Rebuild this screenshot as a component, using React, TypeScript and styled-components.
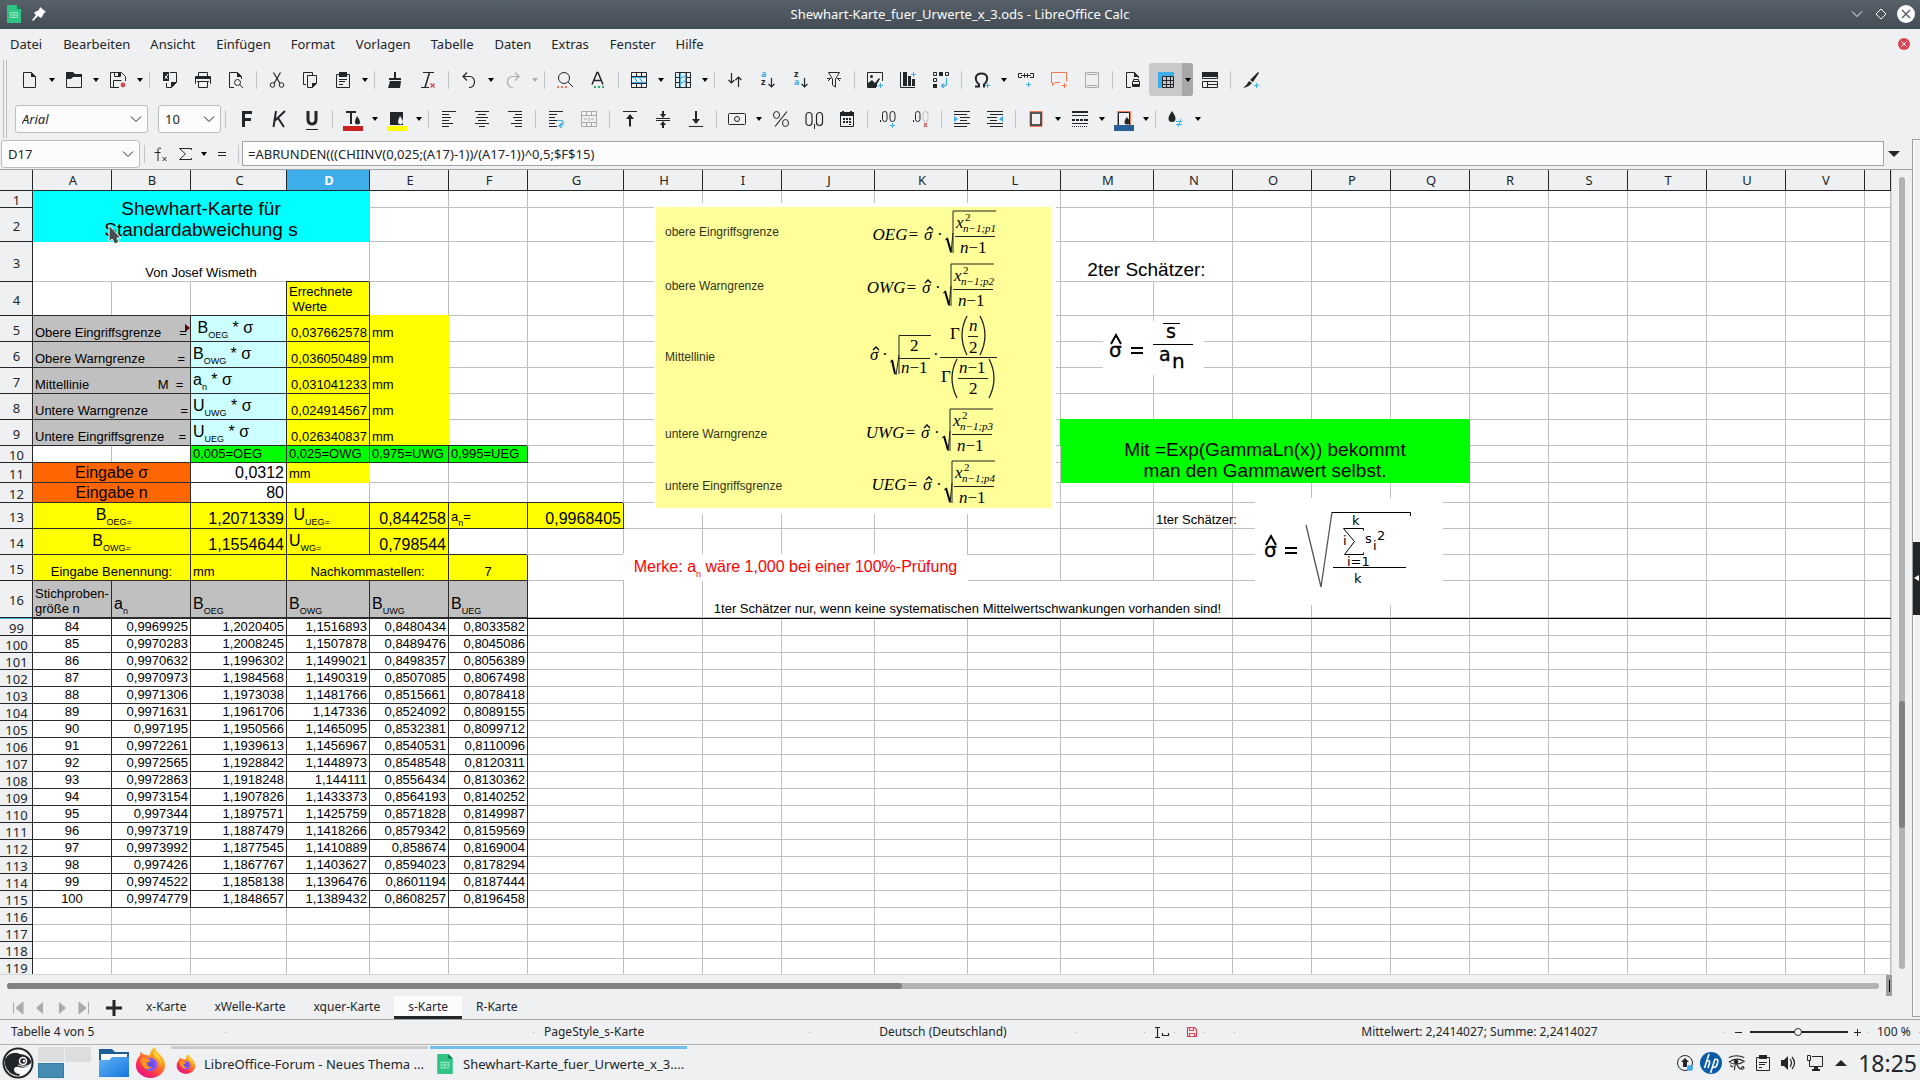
import React from "react";
import styled, { createGlobalStyle, css } from "styled-components";

const INK = "#232629";
const BLUE = "#3daee9";
const RED = "#da4453";
const ORANGE = "#f67450";
const GREEN = "#27ae60";
const MUTED = "#a8aaac";
const PANEL = "#eff0f1";
const LINE = "#a0a2a3";
const GRID = "#c0c0c0";
const UI_FONT = `"Noto Sans", sans-serif`;
const CELL_FONT = `"Liberation Sans", Arial, sans-serif`;

const GlobalStyle = createGlobalStyle`
  *, *::before, *::after { box-sizing: border-box; }
  html, body { margin: 0; padding: 0; }
  body { background: ${PANEL}; color: ${INK}; font-family: ${UI_FONT}; font-size: 13px; overflow: hidden; }
  button, input, select { font: inherit; color: inherit; margin: 0; }
`;

/* ---------- icons ---------- */

type Glyph = React.ReactNode;
const ln = (d: string, stroke = INK, width = 1) => (
  <path d={d} fill="none" stroke={stroke} strokeWidth={width} />
);
const fl = (d: string, fill = INK) => <path d={d} fill={fill} />;
const plus = (x: number, y: number, c = BLUE) => ln(`M${x - 2} ${y + 0.5}h5M${x + 0.5} ${y - 2}v5`, c);
const cross = (x: number, y: number) => ln(`M${x} ${y}l4 4m0 -4l-4 4`, RED, 1.3);
const lines = (rows: [number, number][], c = INK) =>
  ln(rows.map(([x, w], i) => `M${x} ${i * 3 + 0.5}h${w}`).join(""), c);

const glyphs: Record<string, Glyph> = {
  new: <>{ln("M1.5 .5h8l4 4v11h-12z")}{fl("M9 0l5 5h-5z")}</>,
  open: <>{ln("M.5 .5v15h15v-12")}{fl("M0 0h7l2 2h7v3H7L5 7H0z")}</>,
  save: <>{ln("M9 15.5H.5V.5h11l4 4V9")}{ln("M4.5 .5v4h6v-4M3.5 15V8.5h8")}{fl("M8 1h2v3H8z")}<circle cx="13" cy="13" r="2.4" fill={RED} /></>,
  exportPdf: <>{fl("M1 0h6v9H1z")}{ln("M3 7l3-5M3 4l3 3", PANEL)}{ln("M8 .5h6.5v10l-5 5h-5V11")}{fl("M9 10h6l-6 6z")}</>,
  print: <>{ln("M3.5 4V.5h9V4M1 11.5h-.5v-7h15v7H15")}{fl("M1 5h14v2H1z")}{ln("M3.5 9.5h9v6h-9z")}{ln("M2 9.5h12")}</>,
  preview: <>{ln("M6 15.5H1.5V.5h8l4 4V7")}{fl("M9 0l5 5h-5z")}<circle cx="9.5" cy="10.5" r="3" fill="none" stroke={INK} />{ln("M11.5 12.5l3.5 3.5")}</>,
  cut: <>{ln("M4.500 .5l6.500 11M11.500 .5L5 11.500", INK, 1.2)}<circle cx="3.500" cy="13" r="2.300" fill="none" stroke={INK} /><circle cx="12.500" cy="13" r="2.300" fill="none" stroke={INK} /></>,
  copy: <>{ln("M4 12.500H1.500V.5h9V3")}{ln("M5.500 3.500h9v8l-4 4h-5z")}{fl("M10 11h5l-5 5z")}</>,
  paste: <>{ln("M1.500 2.500h13v13h-13z")}{fl("M4 0h8v5H4z")}{ln("M4 7.500h8M4 9.500h6M4 12.500h4")}</>,
  brush: <>{fl("M7 0h2v6h5v2H2V6h5z")}{fl("M3 9h11l-1 7H1z")}</>,
  clear: <>{ln("M3 .5h11M1 15.500h8")}{ln("M9.500 .5L5 15.500", INK, 1.500)}{cross(10.5, 11.5)}</>,
  undo: <>{ln("M2 4.500h7a4.500 5.500 0 0 1 0 11H8", INK, 1.200)}{ln("M6 .5L2 4.500l4 4", INK, 1.200)}</>,
  redo: <>{ln("M14 4.500H7a4.500 5.500 0 0 0 0 11h1", MUTED, 1.200)}{ln("M10 .5l4 4-4 4", MUTED, 1.200)}</>,
  find: <><circle cx="7" cy="6" r="5.500" fill="none" stroke={INK} />{ln("M11 10l5 5")}{fl("M0 14h2v2H0zM4 14h2v2H4zM8 14h2v2H8z", ORANGE)}</>,
  spell: <>{ln("M2 12.500L7 .5h1l5 12M4 8.500h7", INK, 1.500)}{fl("M4 14h2v2H4zM8 14h2v2H8zM12 14h2v2h-2z", GREEN)}</>,
  row: <>{ln("M.5 .5h15v15H.5zM.5 4.500h15M.5 11.500h15M5.500 .5v4M10.500 .5v4M5.500 11.500v4M10.500 11.500v4")}{ln("M1 5.500h14M1 10.500h14M3 5l4 6M8 5l4 6", BLUE, 1.200)}</>,
  col: <>{ln("M.5 .5h15v15H.5zM4.500 .5v15M11.500 .5v15M.5 5.500h4M.5 10.500h4M11.500 5.500h4M11.500 10.500h4")}{ln("M5.500 1v14M10.500 1v14M5 7l6-4M5 12l6-4", BLUE, 1.200)}</>,
  sort: <>{ln("M4.500 1v10M1.500 8l3 3 3-3M11.500 15V5M8.500 8l3-3 3 3", INK, 1.200)}</>,
  filter: <>{ln("M2.500 .5h11L9.500 7v8L6.500 13V7z")}{ln("M1 6.500h4M11 6.500h4M2 9l3-3M14 9l-3-3")}</>,
  image: <>{ln("M9 15.500H.5V.5h15V9")}<circle cx="4.500" cy="4.500" r="1.500" fill={INK} />{fl("M1 15v-4l4-3 3 3 4-5 1 1-3 5v3z")}{plus(13, 13)}</>,
  chart: <>{ln("M.5 0v15.500H15")}{fl("M3 0h4v14H3zM8 4h3v10H8zM12 7h3v7h-3z")}{plus(13, 2)}</>,
  pivot: <>{ln("M.5 .5h3v3h-3zM.5 6.500h3v3h-3zM12.500 .5h3v3h-3z")}{fl("M6 0h4v4H6zM0 12h4v4H0z")}{ln("M13.500 6v6q0 2-4 2M11 11.500L8.500 14l2.500 2", BLUE, 1.200)}</>,
  omega: <>{ln("M1 14.500h4v-2C0 8 1 1.500 7.500 1.500S15 8 10 12.500v2h1", INK, 2)}{plus(13, 13)}</>,
  link: <>{ln("M4 1.500H.5v4H4M7 1.500h-.5v4H7M9 1.500h.5v4H9M12 1.500h3.500v4H12M3 3.500h10")}{plus(10, 12)}</>,
  comment: <>{ln("M9 10.500H4l-2.500 3v-3h-1V.5h15v9", ORANGE)}{plus(13, 13, ORANGE)}</>,
  header: <>{ln("M1.500 .5h13v15h-13zM3 2.500h10M3 13.500h10", MUTED)}</>,
  printRange: <>{ln("M6 15.500H1.500V.5h8l4 4V6")}{fl("M9 0l5 5h-5z")}{ln("M8.500 9.500V7.500h5v2M7.500 9.500h7v5h-7z")}{fl("M8 12h6v2H8z")}</>,
  freeze: <>{fl("M0 0h16v4H4v12H0z", BLUE)}{ln("M4.500 4.500h11v11h-11zM8.500 4v12M12.500 4v12M4 8.500h12M4 12.500h12")}</>,
  split: <>{fl("M0 0h16v5H0z")}{ln("M.5 5v1.500h15V5M.5 9.500h15v6H.5zM5.500 9.500v6M5 12.500h10")}</>,
  pen: <>{fl("M15 0l1 1-6 9-3-2zM6 9l3 2q-3 4-9 5 4-3 6-7z")}{plus(13, 13)}</>,
  bold: <>{fl("M4 0h10v3H7v4h6v3H7v6H4z")}</>,
  italic: <>{ln("M5 0L2.500 16M14 0L4 9.500M7 7l6 9", INK, 2)}</>,
  underline: <>{ln("M4 0v8q0 5 4 5t4-5V0", INK, 3)}{ln("M2 18.500h12")}</>,
  fontColor: <>{ln("M1 1h10M6 1v12", INK, 2)}{fl("M12 5q3 4 3 6a2.500 2.500 0 0 1-5 0q0-2 2-6z")}{fl("M-2 15h20v5H-2z", "#c9211e")}</>,
  fill: <>{fl("M1 1h13v13H1z")}{fl("M11 5q3 4 3 6a2.500 2.500 0 0 1-5 0q0-2 2-6z", PANEL)}{fl("M-2 15h20v5H-2z", "#ffff00")}</>,
  left: lines([[1, 14], [1, 7], [1, 9], [1, 7], [1, 11], [1, 7]]),
  center: lines([[1, 14], [4, 8], [2, 12], [4, 8], [1, 14], [5, 6]]),
  right: lines([[1, 14], [8, 7], [6, 9], [8, 7], [4, 11], [8, 7]]),
  wrap: <>{lines([[1, 14], [1, 8], [1, 6], [1, 8], [1, 6], [1, 8]])}{ln("M9 9.500h5l1 1v3l-3 2M14 12l-3 3 3 2", BLUE, 1.200)}</>,
  merge: <>{ln("M.5 .5h15v15H.5zM.5 4.500h15M.5 11.500h15M5.500 .5v4M10.500 .5v4M5.500 11.500v4M10.500 11.500v4M3 8h3M10 8h3M8 6v4", MUTED)}</>,
  top: <>{ln("M1 .5h14M8 16V5")}{ln("M8 15V6", INK, 2)}{fl("M4 8l4-5 4 5z")}</>,
  middle: <>{ln("M1 7.500h14M1 9.500h14")}{ln("M8 0v4M8 17v-4", INK, 2)}{fl("M5 3h6L8 7zM5 14h6L8 10z")}</>,
  bottom: <>{ln("M1 15.500h14")}{ln("M8 0v10", INK, 2)}{fl("M4 8h8l-4 5z")}</>,
  money: <>{ln("M-.5 3.500q0-1 1-1h15q1 0 1 1v9q0 1-1 1H.5q-1 0-1-1z")}<circle cx="8" cy="8" r="2.500" fill="none" stroke={INK} /></>,
  percent: <>{ln("M14 .5L2 15.500", INK, 1.200)}<ellipse cx="3.500" cy="4" rx="3" ry="3.500" fill="none" stroke={INK} /><ellipse cx="12.500" cy="12" rx="3" ry="3.500" fill="none" stroke={INK} /></>,
  number: <><rect x="0" y="1.500" width="6" height="13" rx="3" fill="none" stroke={INK} strokeWidth="1.200" /><rect x="10.500" y="1.500" width="6" height="13" rx="3" fill="none" stroke={INK} strokeWidth="1.200" />{ln("M8.500 13v5")}</>,
  date: <>{ln("M1.500 2.500h13v13h-13z")}{fl("M1 1h14v4H1zM3 0h2v2H3zM11 0h2v2h-2z")}{fl("M4 7h2v2H4zM7 7h2v2H7zM10 7h2v2h-2zM4 10h2v2H4zM7 10h2v2H7zM10 10h2v2h-2zM10 13h2v1h-2z")}</>,
  addDec: <>{fl("M0 9h1v2H0z")}<rect x="2.500" y=".5" width="4.500" height="10" rx="2.200" fill="none" stroke={INK} /><rect x="10" y=".5" width="5" height="10" rx="2.500" fill="none" stroke={INK} />{plus(12, 14)}</>,
  delDec: <>{fl("M0 9h1v2H0z")}<rect x="2.500" y=".5" width="4.500" height="10" rx="2.200" fill="none" stroke={INK} /><rect x="10" y=".5" width="5" height="10" rx="2.500" fill="none" stroke={GRID} />{ln("M11 12l3 4m0-4l-3 4", RED, 1.200)}</>,
  indent: <>{ln("M0 .5h16M0 3.500h13M6 6.500h10M6 9.500h7M0 12.500h16M0 15.500h13")}{fl("M0 5l4 3-4 3z", BLUE)}</>,
  outdent: <>{ln("M0 .5h16M3 3.500h13M0 6.500h10M3 9.500h7M0 12.500h16M3 15.500h13")}{fl("M16 5l-4 3 4 3z", BLUE)}</>,
  borders: <>{ln("M2 .5h12v15H2z", ORANGE)}{ln("M3 2h10v12H3z", INK, 1.500)}</>,
  lineStyle: <>{fl("M0 0h16v2H0zM0 4h16v1H0z")}{ln("M0 9h16", INK, 2)}{ln("M3.500 8v2M7.500 8v2M11.500 8v2", PANEL)}{ln("M0 12.500h16")}<path d="M0 15.500h16" stroke={INK} strokeDasharray="1 1" /></>,
  borderColor: <>{ln("M1.500 14V.5h13V14", ORANGE)}{ln("M2.500 14V1.500h11V14")}{fl("M11 6q2.500 3 2.500 5a2.500 2.500 0 0 1-5 0q0-2 2.500-5z")}{fl("M-2 14h20v6H-2z", "#2a6099")}</>,
  condition: <>{fl("M4 0q3.500 5 3.500 7.500a3.500 3.500 0 0 1-7 0Q.5 5 4 0z")}{ln("M8 10.500h6M8 13.500h6M13 8l-3 8", BLUE)}</>,
  fx: <>{ln("M8 2.500Q5 1 5 4v11M1.500 6.500h6M9.500 11l4 4m0-4l-4 4")}</>,
  sum: <>{ln("M13.500 4V2.500h-12l6 5.500-6 5.500h12V12")}</>,
  equal: <>{ln("M4 6.500h8M4 9.500h8")}</>,
};

const Svg = styled.svg<{ $s?: number }>`
  display: block;
  flex: none;
  width: ${(p) => p.$s ?? 16}px;
  height: ${(p) => p.$s ?? 16}px;
  overflow: visible;
`;

const SortIcon = ({ desc }: { desc?: boolean }) => (
  <Svg viewBox="0 0 16 16" aria-hidden="true">
    <g fontFamily="Noto Sans, sans-serif" fontSize="9" fontWeight="700">
      <text x="1" y="5" fill={desc ? INK : BLUE}>{desc ? "z" : "a"}</text>
      <text x="1" y="13" fill={desc ? BLUE : INK}>{desc ? "a" : "z"}</text>
    </g>
    {ln("M11.500 6v9M8.500 12l3 3 3-3", INK, 1.2)}
  </Svg>
);

const Icon = ({ name }: { name: string }) => {
  if (name === "asc") return <SortIcon />;
  if (name === "desc") return <SortIcon desc />;
  return <Svg viewBox="0 0 16 16" aria-hidden="true">{glyphs[name]}</Svg>;
};

const CalcLogo = ({ size }: { size: number }) => (
  <Svg $s={size} viewBox="0 0 18 18" aria-hidden="true">
    <path d="M2 0h10l4 4v14H2z" fill="#2fc384" />
    <path d="M12 0l4 4h-4z" fill="#13794a" />
    <path d="M5.500 7.500h7v5h-7zM9 7.500v5M5.500 10h7" fill="none" stroke="#8fe6bd" />
  </Svg>
);

/* ---------- window frame ---------- */

const Desktop = styled.div`
  display: flex;
  flex-direction: column;
  height: 100vh;
  background: ${PANEL};
`;

const TitleBar = styled.header`
  display: grid;
  grid-template-columns: 1fr auto 1fr;
  align-items: center;
  height: 29px;
  flex: none;
  padding: 0 5px 1px;
  background: linear-gradient(#566069, #454d55);
  color: #fcfcfc;
`;

const TitleText = styled.h1`
  margin: 0;
  font-size: 13px;
  line-height: 18px;
  font-weight: 400;
`;

const TitleSide = styled.div<{ $end?: boolean }>`
  display: flex;
  align-items: center;
  gap: 8px;
  justify-content: ${(p) => (p.$end ? "flex-end" : "flex-start")};
`;

const PlainButton = styled.button`
  display: flex;
  align-items: center;
  justify-content: center;
  border: 0;
  padding: 0;
  background: none;
`;

const MenuBar = styled.nav`
  display: flex;
  align-items: center;
  height: 31px;
  flex: none;
  padding: 0 10px 1px 0;
`;

const MenuItem = styled(PlainButton)`
  padding: 0 10px;
  line-height: 20px;

  &:nth-child(even) {
    padding-left: 11px;
  }
`;

const Push = styled.span`
  flex: 1;
`;

const Toolbars = styled.div`
  display: flex;
  flex: none;
  height: 78px;
`;

const Grip = styled.div`
  width: 4px;
  margin: 0 6px 0 3px;
  border: solid #bdbfc1;
  border-width: 0 1px;
`;

const ToolRows = styled.div`
  flex: 1;
  display: flex;
  flex-direction: column;
`;

const ToolRow = styled.div<{ $pad?: number }>`
  display: flex;
  align-items: center;
  height: 39px;
  padding-left: ${(p) => p.$pad ?? 0}px;
`;

const Tool = styled(PlainButton)<{ $on?: boolean }>`
  width: 33px;
  height: 33px;
  ${(p) => p.$on && css`background: #c8c9cb; border-radius: 3px 0 0 3px;`}
`;

const ToolMenu = styled(PlainButton)<{ $on?: boolean; $dim?: boolean }>`
  width: 11px;
  height: 33px;
  color: ${(p) => (p.$dim ? MUTED : "#000")};
  ${(p) => p.$on && css`background: #a5a7a8; border-radius: 0 3px 3px 0;`}
`;

const Caret = styled.span<{ $big?: boolean }>`
  border: solid transparent;
  border-width: ${(p) => (p.$big ? "6px 6px 0" : "4px 3px 0")};
  border-top-color: currentColor;
`;

const Sep = styled.span`
  width: 8px;
  height: 18px;
  flex: none;
  background: linear-gradient(#c4c6c8, #c4c6c8) center / 1px 100% no-repeat;
`;

const ComboBox = styled.label<{ $w: number; $gap?: number; $italic?: boolean }>`
  display: flex;
  align-items: center;
  flex: none;
  width: ${(p) => p.$w}px;
  height: 28px;
  margin-right: ${(p) => p.$gap ?? 0}px;
  padding: 0 5px 0 6px;
  border: 1px solid #bbbdbf;
  border-radius: 3px;
  background: #fcfcfc;
  font-style: ${(p) => (p.$italic ? "italic" : "normal")};
`;

const ComboSelect = styled.select`
  flex: 1;
  min-width: 0;
  border: 0;
  padding: 0;
  background: none;
  appearance: none;
  outline: 0;
`;

const Combo = ({ label, value, ...rest }: { label: string; value: string; $w: number; $gap?: number; $italic?: boolean }) => (
  <ComboBox {...rest}>
    <ComboSelect aria-label={label}>
      <option>{value}</option>
    </ComboSelect>
    <Svg $s={12} viewBox="0 0 12 12">{ln("M1 3.500l5 5 5-5", INK, 1)}</Svg>
  </ComboBox>
);

/* A name per button, "+" after it for an attached drop-down, "|" for a separator. */
const standardTools =
  "new+ open+ save+ | exportPdf print preview | cut copy paste+ | brush clear | undo+ redo+ | find spell | row+ col+ | sort asc desc filter | image chart pivot | omega+ link comment header | printRange freeze+ split | pen";
const formatTools =
  "| bold italic underline | fontColor+ fill+ | left center right | wrap merge | top middle bottom | money+ percent number date | addDec delDec | indent outdent | borders+ lineStyle+ borderColor+ | condition+";

const Tools = ({ spec }: { spec: string }) => (
  <>
    {spec.split(" ").map((token, i) => {
      if (token === "|") return <Sep key={i} />;
      const name = token.replace("+", "");
      const on = name === "freeze";
      return (
        <React.Fragment key={i}>
          <Tool $on={on} aria-label={name}><Icon name={name} /></Tool>
          {token.endsWith("+") && (
            <ToolMenu $on={on} $dim={name === "redo"} aria-label={`${name} menu`}><Caret /></ToolMenu>
          )}
        </React.Fragment>
      );
    })}
  </>
);

/* ---------- document area ---------- */

const Body = styled.main`
  display: flex;
  flex: 1;
  min-height: 0;
  border-bottom: 1px solid ${LINE};
`;

const Document = styled.section`
  display: flex;
  flex-direction: column;
  flex: 1;
  min-width: 0;
`;

const FormulaBar = styled.div`
  display: flex;
  align-items: center;
  height: 32px;
  flex: none;
  padding: 0 12px 0 1px;
  border-bottom: 1px solid ${LINE};
`;

const FormulaTool = styled(PlainButton)`
  width: 25px;
  height: 24px;
`;

const FormulaInput = styled.input`
  flex: 1;
  min-width: 0;
  height: 25px;
  margin: 0 4px 0 0;
  padding: 0 5px;
  border: 1px solid ${LINE};
  background: #fcfcfc;
  outline: 0;
`;

const SheetRow = styled.div`
  display: flex;
  flex: 1;
  min-height: 0;
`;

const SheetView = styled.div`
  position: relative;
  flex: 1;
  min-width: 0;
  overflow: hidden;
  background: #fff;
  border: solid #d5d6d7;
  border-width: 0 1px 1px 0;
`;

const VScroll = styled.div`
  width: 20px;
  flex: none;
  padding: 7px 7px 6px;
`;

const Track = styled.div`
  display: flex;
  width: 100%;
  height: 100%;
  border-radius: 3px;
  background: #b1b3b5;
`;

const VThumb = styled.div`
  width: 6px;
  height: 16%;
  margin-top: 524px;
  border-radius: 3px;
  background: #7f8183;
`;

const HScrollRow = styled.div`
  display: flex;
  height: 21px;
  flex: none;
  padding-right: 20px;
`;

const HScroll = styled.div`
  flex: 1;
  padding: 8px 7px 7px;
`;

const HThumb = styled.div`
  width: 47.8%;
  border-radius: 3px;
  background: #7f8183;
`;

const Splitter = styled.div`
  width: 6px;
  background: linear-gradient(#000, #000) center / 1px 12px no-repeat #9b9d9e;
`;

const Deck = styled.aside`
  display: flex;
  align-items: center;
  width: 8px;
  flex: none;
  margin: 1px 0 2px;
  border: 1px solid #9b9d9e;
  border-right: 0;
  box-shadow: inset 1px 1px #fff;
`;

const DeckHandle = styled(PlainButton)`
  width: 7px;
  height: 73px;
  background: ${INK};
`;

const DeckArrow = styled.span`
  border: solid transparent;
  border-width: 3px 5px 3px 0;
  border-right-color: #fff;
`;

const Tabs = styled.div`
  display: flex;
  height: 23px;
  flex: none;
  padding-left: 7px;
`;

const TabNav = styled(PlainButton)`
  width: 22px;
`;

const AddTab = styled(PlainButton)`
  width: 37px;
`;

const Tab = styled.button<{ $active?: boolean }>`
  border: 0;
  border-bottom: 3px solid ${(p) => (p.$active ? INK : "transparent")};
  padding: 1px 14px 0;
  background: ${(p) => (p.$active ? "#fcfcfc" : "none")};
  line-height: 19px;
  font-size: 12px;
`;

/* ---------- sheet ---------- */

const Table = styled.table`
  width: 100%;
  table-layout: fixed;
  border-collapse: separate;
  border-spacing: 0;
  font-family: ${CELL_FONT};
  font-size: 13px;
  line-height: 15px;
  color: #000;
`;

const ColHead = styled.th<{ $on?: boolean }>`
  height: 21px;
  padding: 0 0 0 2px;
  border: solid ${INK};
  border-width: 0 1px 1px 0;
  background: ${(p) => (p.$on ? BLUE : PANEL)};
  color: ${(p) => (p.$on ? "#fcfcfc" : INK)};
  font-family: ${UI_FONT};
  font-weight: ${(p) => (p.$on ? 700 : 400)};
`;

const RowHead = styled.th<{ $h: number }>`
  height: ${(p) => p.$h}px;
  padding: 2px 0 0 1px;
  border: solid ${INK};
  border-width: 0 1px 1px 0;
  background: ${PANEL};
  color: ${INK};
  font-family: ${UI_FONT};
  font-weight: 400;
  line-height: 14px;
  vertical-align: middle;
`;

const FreezeCell = styled.td<{ $c: string }>`
  height: 1px;
  padding: 0;
  background: ${(p) => p.$c};
`;

type CellStyle = {
  $bg?: string;
  $edge?: string;
  $lead?: string;
  $align?: string;
  $size?: number;
  $sub?: boolean;
  $color?: string;
};

const Cell = styled.td<CellStyle>`
  position: relative;
  padding: 0 2px ${(p) => (p.$sub ? 4 : p.$size === 16 ? 0 : 1)}px 2px;
  border: solid ${(p) => p.$edge ?? GRID};
  border-width: 0 1px 1px 0;
  background: ${(p) => p.$bg ?? "transparent"};
  color: ${(p) => p.$color ?? "#000"};
  ${(p) => p.$lead && css`box-shadow: ${p.$lead};`}
  font-size: ${(p) => p.$size ?? 13}px;
  line-height: ${(p) => (p.$size === 19 ? 21 : p.$size === 16 ? 18 : 15)}px;
  text-align: ${(p) => p.$align ?? "left"};
  vertical-align: bottom;
  white-space: pre;

  sub {
    font-size: 9px;
    line-height: 0;
    vertical-align: -5px;
  }
`;

const OverflowMark = styled.span`
  position: absolute;
  top: 8px;
  right: 0;
  border: solid transparent;
  border-width: 4px 0 4px 5px;
  border-left-color: #500;
`;

type Spec = CellStyle & { text?: React.ReactNode; cols?: number; rows?: number };

const DARK = "#2b2b2b";
const box = (bg?: string): CellStyle => ({ $bg: bg, $edge: DARK, $lead: `-1px -1px 0 ${DARK}` });
const flat = (bg: string): CellStyle => ({ $bg: bg, $edge: bg, $lead: `0 -1px 0 ${bg}` });
const YELLOW = "#ffff00";
const CYAN = "#ccffff";
const GREY = "#c0c0c0";
const LIME = "#00ff00";
const FIRE = "#ff6600";
const sub = (a: string, s: string, b = "") => <>{a}<sub>{s}</sub>{b}</>;

const columns = "ABCDEFGHIJKLMNOPQRSTUV".split("");
const widths = [79, 79, 96, 83, 79, 79, 96, 79, 79, 93, 93, 93, 93, 79, 79, 79, 79, 79, 79, 79, 79, 79];

const limitRow = (label: React.ReactNode, factor: React.ReactNode, value: string): Record<string, Spec> => ({
  A: { ...box(GREY), cols: 2, text: label },
  C: { ...box(CYAN), $size: 16, $sub: true, text: factor },
  D: { ...box(YELLOW), $align: "right", text: value },
  E: { ...flat(YELLOW), text: "mm" },
});

const topRows: { n: number; h: number; cells: Record<string, Spec> }[] = [
  { n: 1, h: 17, cells: { A: { $bg: "#00ffff", $edge: "#00ffff", cols: 4, rows: 2, $size: 19, $align: "center", text: "Shewhart-Karte für\nStandardabweichung s" } } },
  { n: 2, h: 34, cells: {} },
  { n: 3, h: 40, cells: { A: { cols: 4, $align: "center", text: "Von Josef Wismeth" }, M: { cols: 2, $size: 19, $align: "center", text: "2ter Schätzer:" } } },
  { n: 4, h: 34, cells: { D: { ...box(YELLOW), text: "Errechnete\n Werte" } } },
  { n: 5, h: 26, cells: limitRow(<>Obere Eingriffsgrenze     =<OverflowMark /></>, sub(" B", "OEG", " * σ"), "0,037662578") },
  { n: 6, h: 26, cells: limitRow("Obere Warngrenze         =", sub("B", "OWG", " * σ"), "0,036050489") },
  { n: 7, h: 26, cells: limitRow("Mittellinie                   M  =", sub("a", "n", " * σ"), "0,031041233") },
  { n: 8, h: 26, cells: limitRow("Untere Warngrenze         =", sub("U", "UWG", " * σ"), "0,024914567") },
  {
    n: 9, h: 26, cells: {
      ...limitRow("Untere Eingriffsgrenze    =", sub("U", "UEG", " * σ"), "0,026340837"),
      M: { $bg: LIME, $edge: LIME, $lead: `-1px -1px 0 ${LIME}`, cols: 5, rows: 3, $size: 19, $align: "center", text: "Mit =Exp(GammaLn(x)) bekommt\nman den Gammawert selbst." },
    },
  },
  { n: 10, h: 17, cells: { C: { ...box(LIME), text: "0,005=OEG" }, D: { ...box(LIME), text: "0,025=OWG" }, E: { ...box(LIME), text: "0,975=UWG" }, F: { ...box(LIME), text: "0,995=UEG" } } },
  { n: 11, h: 20, cells: { A: { ...box(FIRE), cols: 2, $size: 16, $align: "center", text: "Eingabe σ" }, C: { ...box(), $size: 16, $align: "right", text: "0,0312" }, D: { $bg: YELLOW, $edge: YELLOW, text: "mm" } } },
  { n: 12, h: 20, cells: { A: { ...box(FIRE), cols: 2, $size: 16, $align: "center", text: "Eingabe n" }, C: { ...box(), $size: 16, $align: "right", text: "80" } } },
  {
    n: 13, h: 26, cells: {
      A: { ...box(YELLOW), cols: 2, $size: 16, $sub: true, $align: "center", text: sub(" B", "OEG=") },
      C: { ...box(YELLOW), $size: 16, $align: "right", text: "1,2071339" },
      D: { ...box(YELLOW), $size: 16, $sub: true, text: sub(" U", "UEG=") },
      E: { ...box(YELLOW), $size: 16, $align: "right", text: "0,844258" },
      F: { ...box(YELLOW), $sub: true, text: sub("a", "n", "=") },
      G: { ...box(YELLOW), $size: 16, $align: "right", text: "0,9968405" },
      N: { text: "1ter Schätzer:" },
    },
  },
  {
    n: 14, h: 26, cells: {
      A: { ...box(YELLOW), cols: 2, $size: 16, $sub: true, $align: "center", text: sub("B", "OWG=") },
      C: { ...box(YELLOW), $size: 16, $align: "right", text: "1,1554644" },
      D: { ...box(YELLOW), $size: 16, $sub: true, text: sub("U", "WG=") },
      E: { ...box(YELLOW), $size: 16, $align: "right", text: "0,798544" },
    },
  },
  {
    n: 15, h: 26, cells: {
      A: { ...box(YELLOW), cols: 2, $align: "center", text: "Eingabe Benennung:" },
      C: { ...box(YELLOW), text: "mm" },
      D: { ...box(YELLOW), cols: 2, $align: "center", text: "Nachkommastellen:" },
      F: { ...box(YELLOW), $align: "center", text: "7" },
      H: { $bg: "#fff", $edge: "#fff", $lead: "-1px -1px 0 #fff", cols: 4, $size: 16, $sub: true, $color: "#ff0000", $align: "center", text: sub("Merke: a", "n", " wäre 1,000 bei einer 100%-Prüfung") },
    },
  },
  {
    n: 16, h: 37, cells: {
      A: { ...box(GREY), text: "Stichproben-\ngröße n" },
      B: { ...box(GREY), $size: 16, $sub: true, text: sub("a", "n") },
      C: { ...box(GREY), $size: 16, $sub: true, text: sub("B", "OEG") },
      D: { ...box(GREY), $size: 16, $sub: true, text: sub("B", "OWG") },
      E: { ...box(GREY), $size: 16, $sub: true, text: sub("B", "UWG") },
      F: { ...box(GREY), $size: 16, $sub: true, text: sub("B", "UEG") },
      I: { cols: 6, $align: "center", text: "1ter Schätzer nur, wenn keine systematischen Mittelwertschwankungen vorhanden sind!" },
    },
  },
];

const factors = `84 0,9969925 1,2020405 1,1516893 0,8480434 0,8033582
85 0,9970283 1,2008245 1,1507878 0,8489476 0,8045086
86 0,9970632 1,1996302 1,1499021 0,8498357 0,8056389
87 0,9970973 1,1984568 1,1490319 0,8507085 0,8067498
88 0,9971306 1,1973038 1,1481766 0,8515661 0,8078418
89 0,9971631 1,1961706 1,147336 0,8524092 0,8089155
90 0,997195 1,1950566 1,1465095 0,8532381 0,8099712
91 0,9972261 1,1939613 1,1456967 0,8540531 0,8110096
92 0,9972565 1,1928842 1,1448973 0,8548548 0,8120311
93 0,9972863 1,1918248 1,144111 0,8556434 0,8130362
94 0,9973154 1,1907826 1,1433373 0,8564193 0,8140252
95 0,997344 1,1897571 1,1425759 0,8571828 0,8149987
96 0,9973719 1,1887479 1,1418266 0,8579342 0,8159569
97 0,9973992 1,1877545 1,1410889 0,858674 0,8169004
98 0,997426 1,1867767 1,1403627 0,8594023 0,8178294
99 0,9974522 1,1858138 1,1396476 0,8601194 0,8187444
100 0,9974779 1,1848657 1,1389432 0,8608257 0,8196458`
  .split("\n")
  .map((line) => line.split(" "));

const bottomRows = Array.from({ length: 21 }, (_, i) => ({
  n: 99 + i,
  h: 17,
  cells: Object.fromEntries(
    (factors[i] ?? []).map((text, c) => [columns[c], { ...box(), $align: c ? "right" : "center", text } as Spec])
  ) as Record<string, Spec>,
}));

const renderRows = (rows: { n: number; h: number; cells: Record<string, Spec> }[]) => {
  const covered = new Set<string>();
  return rows.map(({ n, h, cells }, r) => (
    <tr key={n}>
      <RowHead $h={h} scope="row">{n}</RowHead>
      {[...columns, "W"].map((name, c) => {
        if (covered.has(`${r}:${c}`)) return null;
        const { text, cols = 1, rows: down = 1, ...look } = cells[name] ?? {};
        for (let y = 0; y < down; y++) for (let x = 0; x < cols; x++) covered.add(`${r + y}:${c + x}`);
        return <Cell key={name} colSpan={cols} rowSpan={down} {...look}>{text}</Cell>;
      })}
    </tr>
  ));
};

/* ---------- objects floating over the cells ---------- */

const Picture = styled.svg<{ $x: number; $y: number; $w: number; $h: number }>`
  position: absolute;
  left: ${(p) => p.$x}px;
  top: ${(p) => p.$y - 170}px;
  width: ${(p) => p.$w}px;
  height: ${(p) => p.$h}px;
  background: #fff;
`;

const Pointer = styled.svg`
  position: absolute;
  left: 108px;
  top: 54px;
  width: 14px;
  height: 22px;
`;

const Hat = ({ x, y }: { x: number; y: number }) => (
  <path d={`M${x - 3} ${y + 3}l3 -3 3 3`} fill="none" stroke="#000" strokeWidth="1.3" />
);

const LimitFormula = ({ name, p, dy, dx }: { name: string; p: string; dy: number; dx: number }) => (
  <g transform={`translate(${dx} ${dy})`}>
    <text x="919" y="240" textAnchor="end" fontStyle="italic">{name}=</text>
    <text x="924" y="240" fontStyle="italic">σ</text>
    <Hat x={930} y={227} />
    <text x="937" y="240">·</text>
    <path d="M945 240l3 -2 M953 253V211H996M955 236.500H995" fill="none" stroke="#222" />
    <path d="M947 238l4 14" stroke="#000" strokeWidth="2" />
    <path d="M951 253l2 -20" stroke="#222" />
    <text x="956" y="228" fontStyle="italic">x</text>
    <text x="965" y="221" fontSize="11">2</text>
    <text x="963" y="232" fontSize="11" fontStyle="italic">n−1;p{p}</text>
    <text x="960" y="253"><tspan fontStyle="italic">n</tspan>−1</text>
  </g>
);

const FormulaPicture = () => (
  <Picture $x={654} $y={203} $w={402} $h={311} viewBox="654 203 402 311" role="img" aria-label="Formeln der Grenzen">
    <rect x="656" y="207" width="395" height="301" fill="#ffff99" />
    <g fontFamily="Liberation Sans, Arial, sans-serif" fontSize="12" fill="#333320">
      <text x="665" y="236">obere Eingriffsgrenze</text>
      <text x="665" y="290">obere Warngrenze</text>
      <text x="665" y="361">Mittellinie</text>
      <text x="665" y="438">untere Warngrenze</text>
      <text x="665" y="490">untere Eingriffsgrenze</text>
    </g>
    <g fontFamily="Liberation Serif, Times New Roman, serif" fontSize="17" fill="#000">
      <LimitFormula name="OEG" p="1" dx={0} dy={0} />
      <LimitFormula name="OWG" p="2" dx={-2} dy={53} />
      <LimitFormula name="UWG" p="3" dx={-3} dy={198} />
      <LimitFormula name="UEG" p="4" dx={-1} dy={250} />
      <text x="870" y="360" fontStyle="italic">σ</text>
      <Hat x={876} y={347} />
      <text x="882" y="360">·</text>
      <path d="M890 362l3 -2M899 374V335.500H931M899 358.500H930M940 357.500H997" fill="none" stroke="#222" />
      <path d="M892 360l3 14" stroke="#000" strokeWidth="2" />
      <path d="M896 375l3 -20" stroke="#222" />
      <text x="910" y="351">2</text>
      <text x="901" y="373"><tspan fontStyle="italic">n</tspan>−1</text>
      <text x="933" y="360">·</text>
      <text x="950" y="339">Γ</text>
      <path d="M967 316q-10 19 0 39M980 316q10 19 0 39M957 359q-10 19 0 39M989 359q10 19 0 39" fill="none" stroke="#222" strokeWidth="1.300" />
      <text x="969" y="331" fontStyle="italic">n</text>
      <path d="M968 336.500H978M958 378.500H988" stroke="#222" />
      <text x="969" y="353">2</text>
      <text x="941" y="382">Γ</text>
      <text x="959" y="373"><tspan fontStyle="italic">n</tspan>−1</text>
      <text x="969" y="394">2</text>
    </g>
  </Picture>
);

const SecondEstimator = () => (
  <Picture $x={1103} $y={321} $w={101} $h={54} viewBox="1103 321 101 54" role="img" aria-label="2ter Schätzer">
    <g fontFamily="DejaVu Sans, sans-serif" fontSize="20" fill="#000" stroke="#000" strokeWidth=".3">
      <text x="1109" y="357">σ</text>
      <text x="1166" y="338" fontSize="19">s</text>
      <text x="1159" y="361" fontSize="19">a</text>
      <text x="1172" y="368">n</text>
    </g>
    <path d="M1111 344l5 -9 5 9M1131 348H1143M1131 353H1143" fill="none" stroke="#000" strokeWidth="2" />
    <path d="M1163 323.500H1180M1153 344.500H1193" stroke="#000" />
  </Picture>
);

const FirstEstimator = () => (
  <Picture $x={1255} $y={498} $w={188} $h={107} viewBox="1255 498 188 107" role="img" aria-label="1ter Schätzer">
    <g fontFamily="DejaVu Sans, sans-serif" fontSize="13" fill="#000">
      <text x="1264" y="557" fontSize="20" stroke="#000" strokeWidth=".3">σ</text>
      <text x="1352" y="525">k</text>
      <text x="1343" y="545">i</text>
      <text x="1365" y="543">s</text>
      <text x="1373" y="550">i</text>
      <text x="1377" y="540">2</text>
      <text x="1347" y="566">i=1</text>
      <text x="1354" y="583">k</text>
    </g>
    <path d="M1266 545l5 -9 5 9M1285 548H1297M1285 553H1297" fill="none" stroke="#000" strokeWidth="2" />
    <path d="M1306 525L1321 587L1332 512" fill="none" stroke="#555" strokeWidth="1.300" />
    <path d="M1332 512.500H1410.500V516M1363.500 530.500V528.500H1343.500L1354.500 541.500L1344.500 554.500H1363.500V552.500M1333 567.500H1406" fill="none" stroke="#000" />
  </Picture>
);

/* ---------- status bar ---------- */

const StatusBar = styled.footer`
  display: grid;
  grid-template-columns: 226px 308px 276px 266px 69px 30px 30px 30px 1fr 144px 52px;
  align-items: center;
  height: 25px;
  flex: none;
  border-bottom: 1px solid #b0b2b4;
  font-size: 12px;
  line-height: 18px;
`;

const Field = styled.div<{ $pad?: number; $mid?: boolean }>`
  display: flex;
  align-items: center;
  justify-content: ${(p) => (p.$mid ? "center" : "flex-start")};
  padding-left: ${(p) => p.$pad ?? 0}px;
  height: 20px;
  white-space: nowrap;
  background: radial-gradient(#aaa, #aaa) right center / 1px 1px no-repeat;
`;

const ZoomStep = styled(PlainButton)`
  width: 8px;
  height: 16px;
`;

const ZoomRange = styled.input`
  appearance: none;
  width: 98px;
  height: 16px;
  margin: 0 6px 0 7px;
  background: linear-gradient(${INK}, ${INK}) center / 100% 2px no-repeat;
  &::-webkit-slider-thumb {
    appearance: none;
    width: 8px;
    height: 8px;
    border: 1px solid ${INK};
    border-radius: 50%;
    background: #fcfcfc;
  }
`;

/* ---------- task bar ---------- */

const TaskBar = styled.footer`
  display: flex;
  align-items: center;
  height: 35px;
  flex: none;
  padding: 0 3px 0 2px;
`;

const Pager = styled.div`
  display: grid;
  grid-template: 15px 15px / 26px 26px;
  gap: 1px;
  margin: 0 8px 0 4px;
`;

const Desk = styled(PlainButton)<{ $on?: boolean }>`
  background: ${(p) => (p.$on ? "#478cb2" : "#dcddde")};
  ${(p) => p.$on && css`grid-row: 2; border: 1px solid #2e7ba6;`}
`;

const Task = styled.button<{ $active?: boolean }>`
  display: flex;
  align-items: center;
  gap: 8px;
  width: 257px;
  height: 33px;
  margin: 0 2px 0 0;
  padding: 0 0 1px 5px;
  border: 0;
  border-top: 3px solid ${(p) => (p.$active ? "#6fbfec" : "#cbcccd")};
  background: none;
  font-size: 13px;
  white-space: nowrap;
`;

const Launchers = styled.div`
  display: flex;
  gap: 6px;
  margin-right: 5px;
`;

const Tray = styled.div`
  display: flex;
  align-items: center;
  gap: 8px;
`;

const TrayIcon = styled.button`
  display: flex;
  align-items: center;
  justify-content: center;
  width: 18px;
  height: 24px;
  border: 0;
  padding: 0;
  background: none;
`;

const Clock = styled.time`
  font-size: 23px;
  line-height: 32px;
`;

const Firefox = ({ size }: { size: number }) => (
  <Svg $s={size} viewBox="0 0 32 32" aria-hidden="true">
    <defs>
      <linearGradient id="flame" x1="1" y1="0" x2=".3" y2="1">
        <stop offset="0" stopColor="#fff44f" />
        <stop offset=".4" stopColor="#ff9a1f" />
        <stop offset=".75" stopColor="#ff3647" />
        <stop offset="1" stopColor="#e31587" />
      </linearGradient>
      <radialGradient id="globe"><stop offset="0" stopColor="#5b4ad8" /><stop offset="1" stopColor="#9059ff" /></radialGradient>
    </defs>
    <path d="M20 0q2 5 6 8 5 5 5 11a15 13 0 0 1-30 0q0-6 4-10l1-4q2 3 4 3 3 0 5 1 1-6 5-9z" fill="url(#flame)" />
    <circle cx="16" cy="18" r="7" fill="url(#globe)" />
    <path d="M6 12q3-2 6 0 3 0 4 2-1 2-4 2 0 5 6 5-6 4-10-1-3-4-2-8z" fill="#ff9320" />
    <path d="M20 4q8 6 7 15-1-7-6-9-2-3-1-6z" fill="#ffd83a" />
  </Svg>
);

const Chameleon = () => (
  <Svg $s={32} viewBox="0 0 32 32" aria-hidden="true">
    <circle cx="16" cy="16" r="14.500" fill="#fcfcfc" stroke={INK} strokeWidth="2" />
    <path d="M3 12Q9 3 18 7q9 1 11 7 0 4-3 5-5 3-9 1-5-1-5 3 1 4 6 4l-1 2Q6 28 3 18z" fill={INK} />
    <circle cx="21" cy="14" r="3.500" fill="none" stroke="#fcfcfc" strokeWidth="1.500" />
    <circle cx="22" cy="14" r="1.300" fill="#fcfcfc" />
    <path d="M16 18q7 3 13-1" fill="none" stroke="#fcfcfc" />
  </Svg>
);

const Folder = () => (
  <Svg $s={30} viewBox="0 0 30 30" aria-hidden="true">
    <defs><linearGradient id="folder" x1="0" y1="0" x2="1" y2="1"><stop offset="0" stopColor="#62b6f5" /><stop offset="1" stopColor="#1474dd" /></linearGradient></defs>
    <path d="M0 1h13l3 3h14v10H0z" fill="#1c5f96" />
    <path d="M2 6h26v6H2z" fill="#fcfcfc" />
    <path d="M0 12h10l3-3h17v20H0z" fill="url(#folder)" />
  </Svg>
);

const menus = ["Datei", "Bearbeiten", "Ansicht", "Einfügen", "Format", "Vorlagen", "Tabelle", "Daten", "Extras", "Fenster", "Hilfe"];
const sheets = ["x-Karte", "xWelle-Karte", "xquer-Karte", "s-Karte", "R-Karte"];
const navShapes = ["M3.500 2v12M13 2v12l-7-6z", "M11 2v12L4 8z", "M5 2v12l7-6z", "M12.500 2v12M3 2v12l7-6z"];

export default function App() {
  return (
    <Desktop>
      <GlobalStyle />
      <TitleBar>
        <TitleSide>
          <CalcLogo size={18} />
          <Svg viewBox="0 0 16 16" aria-hidden="true">
            <path d="M9 1l6 5-2 1-2 4-1 1-3-2-5 5-1-1 4-5-2-2 1-1 4-2z" fill="#fcfcfc" />
          </Svg>
        </TitleSide>
        <TitleText>Shewhart-Karte_fuer_Urwerte_x_3.ods - LibreOffice Calc</TitleText>
        <TitleSide $end>
          <PlainButton aria-label="Minimieren"><Svg viewBox="0 0 16 16">{ln("M3 5.500l5 5 5-5", "#fcfcfc")}</Svg></PlainButton>
          <PlainButton aria-label="Maximieren"><Svg viewBox="0 0 16 16">{ln("M8 3l5 5-5 5-5-5z", "#fcfcfc")}</Svg></PlainButton>
          <PlainButton aria-label="Schließen">
            <Svg $s={18} viewBox="0 0 18 18"><circle cx="9" cy="9" r="9" fill="#fcfcfc" />{ln("M5 5l8 8M13 5l-8 8", "#4d565e", 1.2)}</Svg>
          </PlainButton>
        </TitleSide>
      </TitleBar>
      <MenuBar>
        {menus.map((name) => <MenuItem key={name}>{name}</MenuItem>)}
        <Push />
        <PlainButton aria-label="Dokument schließen">
          <Svg $s={12} viewBox="0 0 12 12"><circle cx="6" cy="6" r="6" fill={RED} />{ln("M3.500 3.500l5 5M8.500 3.500l-5 5", "#fff")}</Svg>
        </PlainButton>
      </MenuBar>
      <Toolbars>
        <Grip />
        <ToolRows>
          <ToolRow><Tools spec={standardTools} /></ToolRow>
          <ToolRow $pad={2}>
            <Combo label="Schriftname" value="Arial" $w={133} $gap={10} $italic />
            <Combo label="Schriftgröße" value="10" $w={63} />
            <Tools spec={formatTools} />
          </ToolRow>
        </ToolRows>
      </Toolbars>
      <Body>
        <Document>
          <FormulaBar>
            <Combo label="Namensfeld" value="D17" $w={139} />
            <Sep />
            <FormulaTool aria-label="Funktionsassistent"><Icon name="fx" /></FormulaTool>
            <FormulaTool aria-label="Summe"><Icon name="sum" /></FormulaTool>
            <ToolMenu aria-label="Funktion wählen"><Caret /></ToolMenu>
            <FormulaTool aria-label="Formel"><Icon name="equal" /></FormulaTool>
            <Sep />
            <FormulaInput aria-label="Eingabezeile" defaultValue="=ABRUNDEN(((CHIINV(0,025;(A17)-1))/(A17-1))^0,5;$F$15)" />
            <PlainButton aria-label="Formelleiste aufklappen"><Caret $big /></PlainButton>
          </FormulaBar>
          <SheetRow>
            <SheetView>
              <Table>
                <colgroup>
                  <col width={33} />
                  {widths.map((w, i) => <col key={i} width={w} />)}
                  <col />
                </colgroup>
                <thead>
                  <tr>
                    <ColHead />
                    {columns.map((name) => <ColHead key={name} scope="col" $on={name === "D"}>{name}</ColHead>)}
                    <ColHead />
                  </tr>
                </thead>
                <tbody>
                  {renderRows(topRows)}
                  <tr><FreezeCell $c={BLUE} /><FreezeCell $c="#000" colSpan={23} /></tr>
                  {renderRows(bottomRows)}
                </tbody>
              </Table>
              <FormulaPicture />
              <SecondEstimator />
              <FirstEstimator />
              <Pointer viewBox="0 0 14 22" aria-hidden="true">
                <path d="M1 1v17l3-3 3 5 4-2-2-4h4z" fill="#4a4d50" stroke="#fff" />
              </Pointer>
            </SheetView>
            <VScroll><Track><VThumb /></Track></VScroll>
          </SheetRow>
          <HScrollRow>
            <HScroll><Track><HThumb /></Track></HScroll>
            <Splitter />
          </HScrollRow>
          <Tabs>
            {navShapes.map((d) => (
              <TabNav key={d} aria-label="Tabellen blättern">
                <Svg viewBox="0 0 16 16"><path d={d} fill={MUTED} stroke={d.includes("M3.5") || d.includes("M12.5") ? MUTED : "none"} /></Svg>
              </TabNav>
            ))}
            <AddTab aria-label="Tabelle hinzufügen"><Svg viewBox="0 0 16 16">{ln("M0 8h16M8 0v16", INK, 3)}</Svg></AddTab>
            {sheets.map((name) => <Tab key={name} $active={name === "s-Karte"}>{name}</Tab>)}
          </Tabs>
        </Document>
        <Deck>
          <DeckHandle aria-label="Seitenleiste"><DeckArrow /></DeckHandle>
        </Deck>
      </Body>
      <StatusBar>
        <Field $pad={11}>Tabelle 4 von 5</Field>
        <Field />
        <Field $pad={10}>PageStyle_s-Karte</Field>
        <Field $mid>Deutsch (Deutschland)</Field>
        <Field />
        <Field $pad={10}><Svg viewBox="0 0 16 16">{ln("M0 3.500h5M2.500 3v10M0 13.500h5M7.500 9v2.500h6V9", INK, 1.2)}</Svg></Field>
        <Field $pad={11}><Svg $s={12} viewBox="0 0 12 12">{ln("M1.500 1.500h7l2 2v7h-9zM3.500 1.500v3h4v-3M3.500 10.500v-3h5v3", RED, 1.2)}</Svg></Field>
        <Field />
        <Field $mid>Mittelwert: 2,2414027; Summe: 2,2414027</Field>
        <Field $pad={11}>
          <ZoomStep aria-label="Verkleinern"><Svg $s={8} viewBox="0 0 8 8">{ln("M0 4.500h7")}</Svg></ZoomStep>
          <ZoomRange type="range" aria-label="Maßstab" defaultValue={49} />
          <ZoomStep aria-label="Vergrößern"><Svg $s={8} viewBox="0 0 8 8">{ln("M0 4.500h7M3.500 1v7")}</Svg></ZoomStep>
        </Field>
        <Field $pad={9}>100 %</Field>
      </StatusBar>
      <TaskBar>
        <PlainButton aria-label="Startmenü"><Chameleon /></PlainButton>
        <Pager>
          <Desk aria-label="Arbeitsfläche 1" />
          <Desk aria-label="Arbeitsfläche 2" />
          <Desk aria-label="Arbeitsfläche 3" $on />
        </Pager>
        <Launchers>
          <PlainButton aria-label="Dateien"><Folder /></PlainButton>
          <PlainButton aria-label="Firefox"><Firefox size={31} /></PlainButton>
        </Launchers>
        <Task><Firefox size={20} />LibreOffice-Forum - Neues Thema ...</Task>
        <Task $active><CalcLogo size={20} />Shewhart-Karte_fuer_Urwerte_x_3....</Task>
        <Push />
        <Tray>
          <TrayIcon aria-label="Aktualisierungen"><Svg $s={18} viewBox="0 0 18 18"><circle cx="9" cy="9" r="7.500" fill="none" stroke={INK} />{fl("M9 4l4 4h-2v5H7V8H5z")}<circle cx="14" cy="14" r="3" fill={BLUE} /></Svg></TrayIcon>
          <TrayIcon aria-label="HP">
            <Svg $s={22} viewBox="0 0 22 22">
              <circle cx="11" cy="11" r="11" fill="#0a5ca8" />
              {ln("M9 2L4.500 16M6.500 9.500q4-2 3 1.500l-1.500 5M15 7l-4.500 14M14.500 7.500q4.500-1 3 3.500-1 5-5 4.500", "#fff", 1.6)}
            </Svg>
          </TrayIcon>
          <TrayIcon aria-label="Farbtemperatur"><Svg $s={18} viewBox="0 0 20 20">{ln("M1 4q8-4 17 0M1 9q8-6 17-1-8 6-17 1M8 12l-1 6M10 12q2 5 6 5 3-1 1-3-2 0-2 2M3 12q0 3 3 2", INK, 1.2)}<circle cx="9" cy="8.500" r="2.500" fill={INK} /></Svg></TrayIcon>
          <TrayIcon aria-label="Zwischenablage"><Svg $s={18} viewBox="0 0 18 18">{ln("M2.500 3.500h13v13h-13z")}{fl("M5 1h8v4H5z")}{ln("M5 8.500h8M5 10.500h6M5 13.500h3")}</Svg></TrayIcon>
          <TrayIcon aria-label="Lautstärke"><Svg $s={18} viewBox="0 0 18 18">{fl("M1 6h3l4-4v14l-4-4H1z")}{ln("M10 5q3 4 0 8M12 3q5 6 0 12", INK, 1.2)}</Svg></TrayIcon>
          <TrayIcon aria-label="Netzwerk"><Svg $s={18} viewBox="0 0 18 18">{ln("M6 2.500h10.500v10H3.500V7M1.500 1.500h3v5h-3z")}{fl("M8 13h4v2h2v2H6v-2h2z")}</Svg></TrayIcon>
          <TrayIcon aria-label="Mehr anzeigen"><Svg $s={18} viewBox="0 0 18 18">{fl("M9 6l6 6H3z")}</Svg></TrayIcon>
          <Clock>18:25</Clock>
        </Tray>
      </TaskBar>
    </Desktop>
  );
}
